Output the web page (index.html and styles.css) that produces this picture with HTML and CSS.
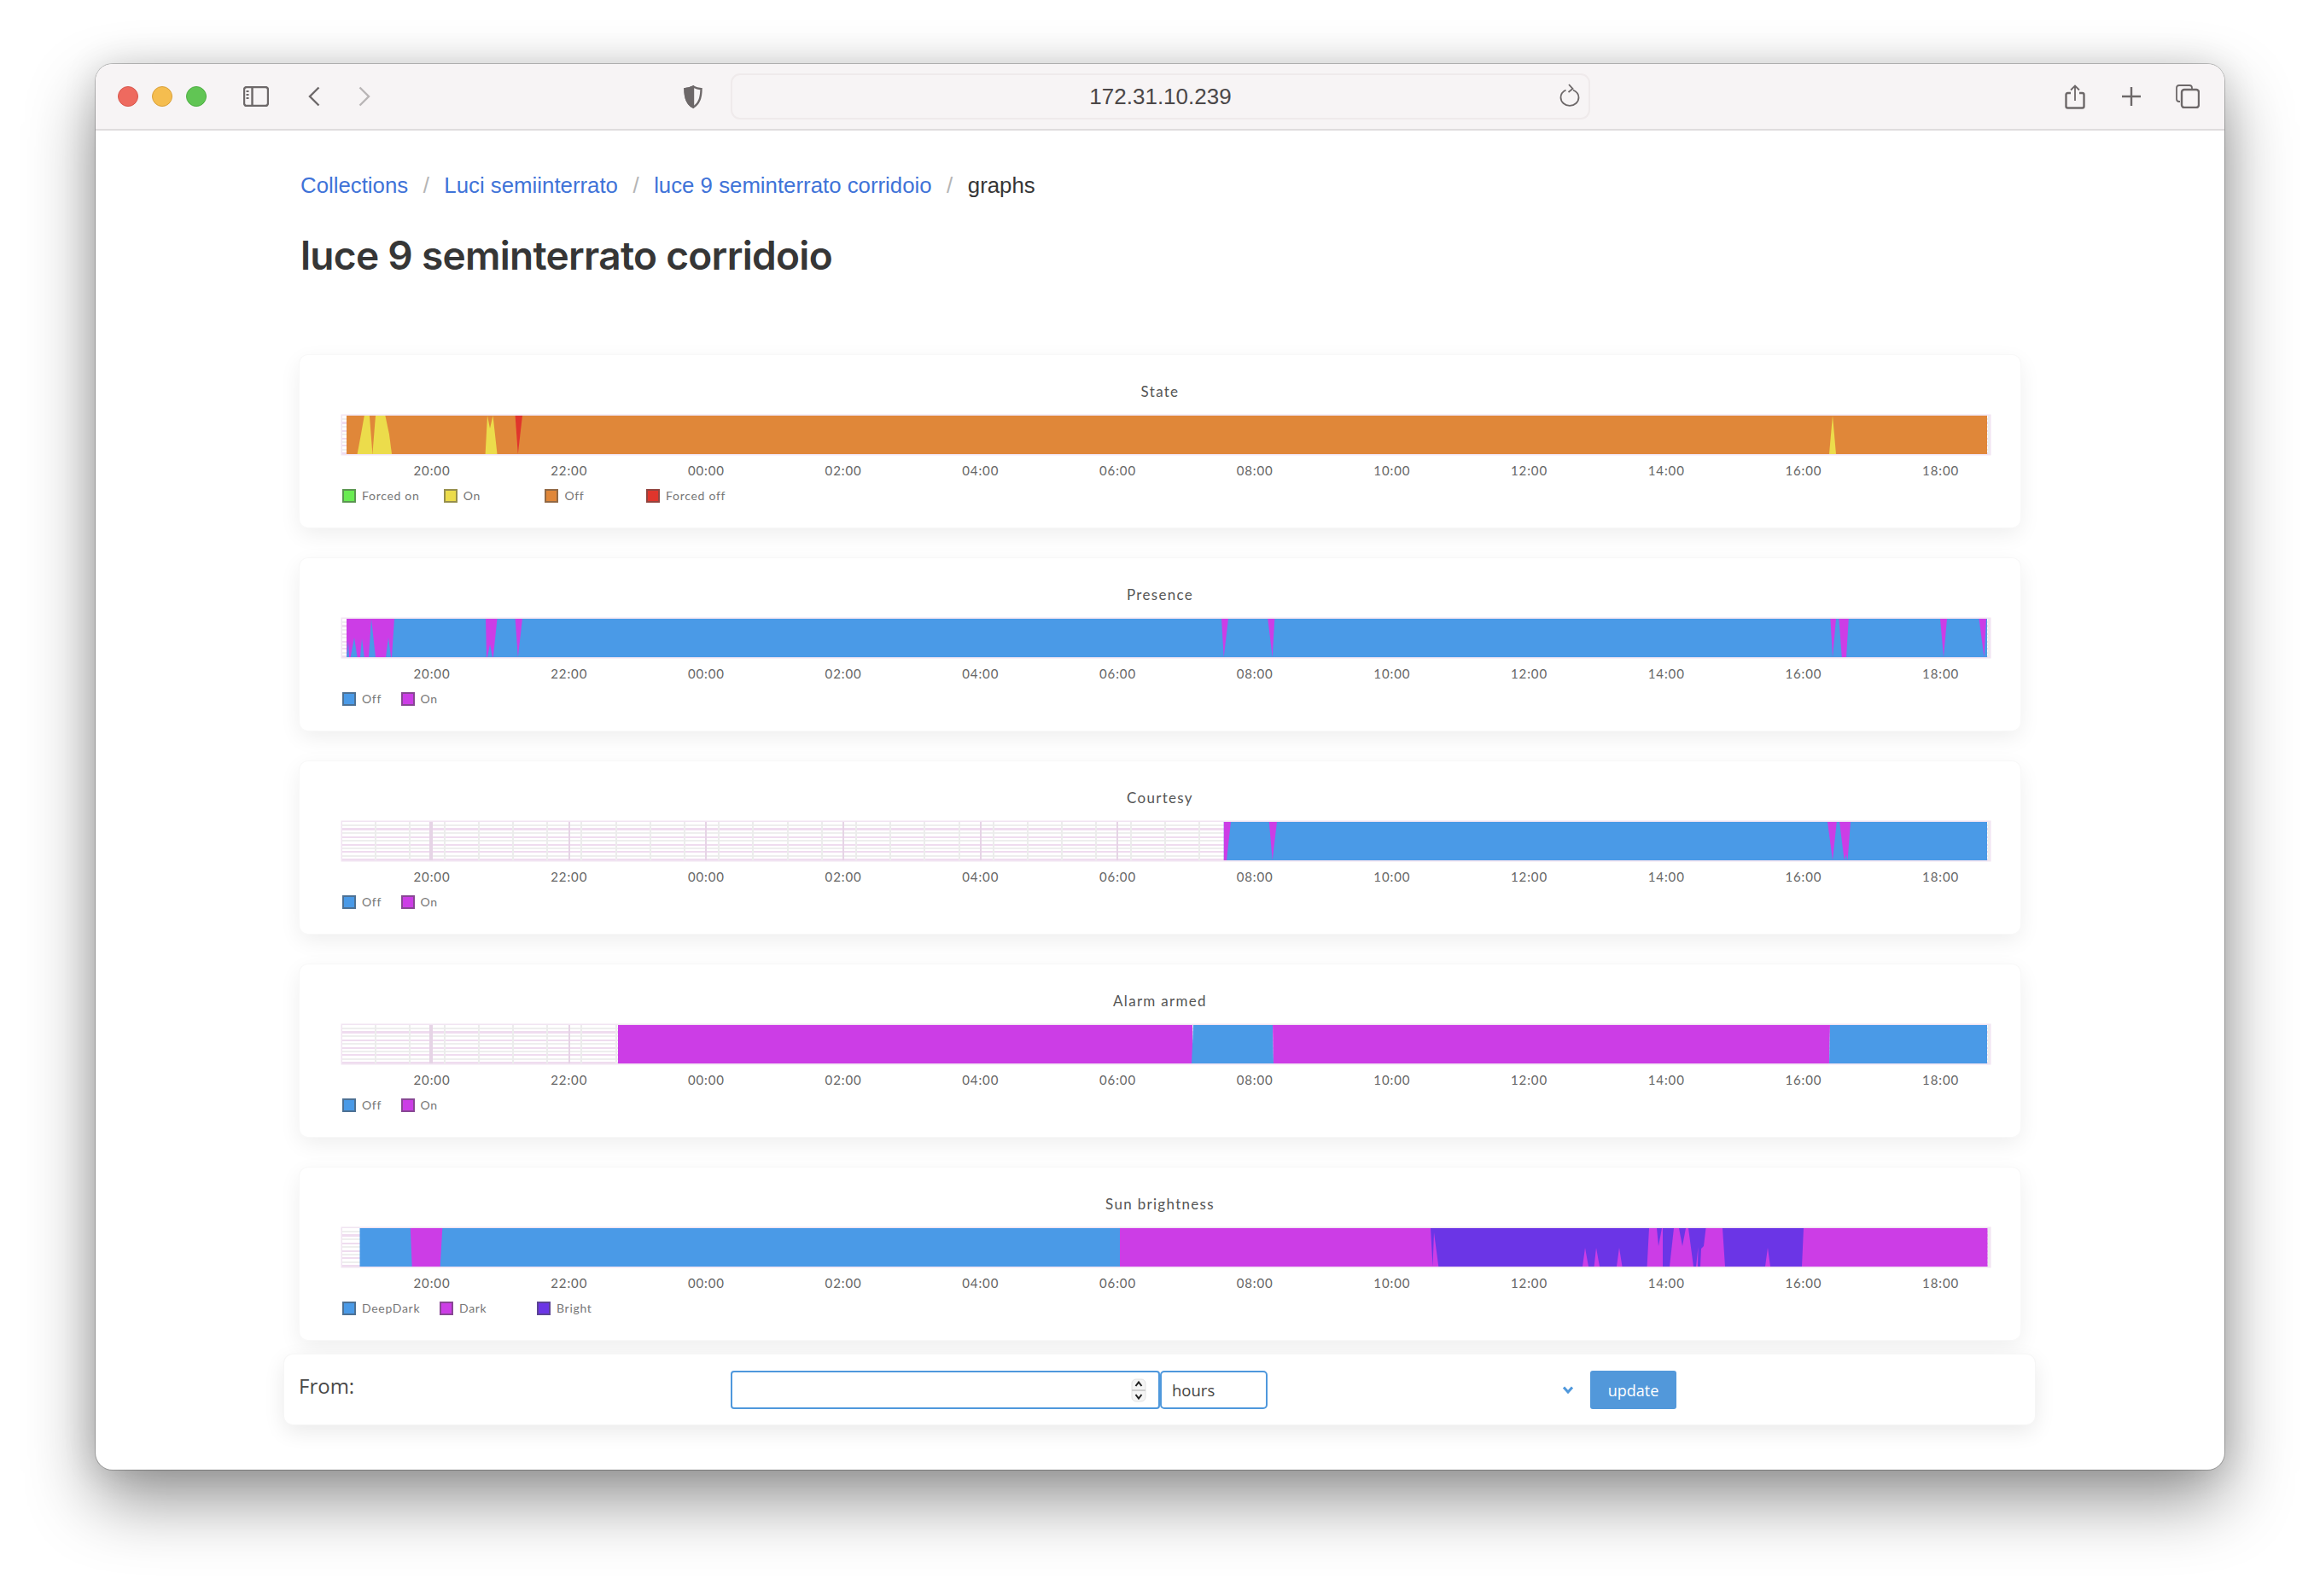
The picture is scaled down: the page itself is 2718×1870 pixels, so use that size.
FILE: index.html
```html
<!DOCTYPE html>
<html lang="it">
<head>
<meta charset="utf-8">
<title>luce 9 seminterrato corridoio</title>
<link rel="stylesheet" href="styles.css">
</head>
<body>
<div class="window">
  <header class="toolbar">
    <div class="lights"><span class="light red"></span><span class="light yellow"></span><span class="light green"></span></div>
    <svg class="ico sidebar" width="30" height="24" viewBox="0 0 30 24"><rect x="1" y="1" width="28" height="22" rx="3"/><path d="M10.5 1v22"/><path class="thin" d="M3.5 6h3M3.5 10h3M3.5 14h3"/></svg>
    <svg class="ico back" width="14" height="24" viewBox="0 0 14 24"><path d="M12.5 1.5 2 12l10.500 10.500"/></svg>
    <svg class="ico forward" width="14" height="24" viewBox="0 0 14 24"><path d="M1.500 1.500 12 12 1.500 22.500"/></svg>
    <svg class="ico shield" width="22" height="27" viewBox="0 0 22 27"><path class="fill" d="M11 1.500C8 3 4.500 4 1.500 4.200 1.500 15 4 22 11 25.500Z"/><path d="M11 1.500C14 3 17.500 4 20.500 4.200 20.500 15 18 22 11 25.500 4 22 1.500 15 1.500 4.200 4.500 4 8 3 11 1.500Z"/></svg>
    <div class="urlbar">
      <span class="url">172.31.10.239</span>
      <svg class="ico reload" width="24" height="27" viewBox="0 0 24 27"><path class="thin" d="M16 7.500C19.800 9.200 22.500 12.500 22.500 16.200 22.500 21.500 17.800 25.800 12 25.800S1.500 21.500 1.500 16.200C1.500 12.500 3.800 9.300 7.500 7.500"/><path class="thin" d="M11 1 15.500 6 10.500 10"/></svg>
    </div>
    <svg class="ico share" width="24" height="29" viewBox="0 0 24 29"><path d="M7 10H3.500Q1.500 10 1.500 12V25.500Q1.500 27.500 3.500 27.500H20.500Q22.500 27.500 22.500 25.500V12Q22.500 10 20.500 10H17"/><path class="thin" d="M12 19V1.500M7 6.500 12 1.500 17 6.500"/></svg>
    <svg class="ico plus" width="22" height="22" viewBox="0 0 22 22"><path d="M11 0v22M0 11h22"/></svg>
    <svg class="ico tabs" width="28" height="28" viewBox="0 0 28 28"><path class="thin" d="M5 20H4Q1 20 1 17V4Q1 1 4 1H16Q19 1 19 4V5"/><rect x="7" y="6" width="20" height="21" rx="3"/></svg>
  </header>

  <main class="content">
    <nav><ol class="crumbs">
      <li><a href="#">Collections</a></li>
      <li><a href="#">Luci semiinterrato</a></li>
      <li><a href="#">luce 9 seminterrato corridoio</a></li>
      <li class="current">graphs</li>
    </ol></nav>
    <h1 class="title">luce 9 seminterrato corridoio</h1>

    <section class="card">
      <h2 class="chart-title">State</h2>
      <div class="plot"><svg class="bands" width="1930" height="45" viewBox="0 0 1930 45">
        <rect class="orange" x="5" width="1922" height="45"/>
        <polygon class="yellow" points="17.600,45 21.900,22 25.800,0 31.900,0 35.400,45"/>
        <polygon class="yellow" points="35.400,45 39,0 50.400,0 55,22 58,45"/>
        <polygon class="yellow" points="167.600,45 170,0 173,15 176.500,0 181.500,45"/>
        <polygon class="red" points="202.600,0 211,0 205.800,45"/>
        <polygon class="yellow" points="1742,45 1746,0 1750,45"/>
      </svg></div>
      <div class="ticks"><span>20:00</span><span>22:00</span><span>00:00</span><span>02:00</span><span>04:00</span><span>06:00</span><span>08:00</span><span>10:00</span><span>12:00</span><span>14:00</span><span>16:00</span><span>18:00</span></div>
      <ul class="legend wide">
        <li><i class="swatch s-green"></i>Forced on</li>
        <li><i class="swatch s-yellow"></i>On</li>
        <li><i class="swatch s-orange"></i>Off</li>
        <li><i class="swatch s-red"></i>Forced off</li>
      </ul>
    </section>

    <section class="card">
      <h2 class="chart-title">Presence</h2>
      <div class="plot"><svg class="bands" width="1930" height="45" viewBox="0 0 1930 45">
        <rect class="blue" x="5" width="1922" height="45"/>
        <polygon class="magenta" points="5,0 61,0 58,45 57,45 54,22 51,45 39,45 34,0 31,45 25.800,45 23,23 21,45 17.600,45 14,22 9.700,45 8,45 6.900,26 5,45"/>
        <polygon class="magenta" points="168,0 181.500,0 176.800,45 176,45 173,30 170,45 169,45"/>
        <polygon class="magenta" points="202.600,0 211,0 205.800,45"/>
        <polygon class="magenta" points="1030,0 1038,0 1032.700,45"/>
        <polygon class="magenta" points="1084.300,0 1092.300,0 1089.700,45"/>
        <polygon class="magenta" points="1743.400,0 1750,0 1746,45"/>
        <polygon class="magenta" points="1753.400,0 1764.800,0 1762,45 1756.800,45"/>
        <polygon class="magenta" points="1872,0 1880,0 1876,45"/>
        <polygon class="magenta" points="1917.500,0 1926,0 1923.500,45"/>
      </svg></div>
      <div class="ticks"><span>20:00</span><span>22:00</span><span>00:00</span><span>02:00</span><span>04:00</span><span>06:00</span><span>08:00</span><span>10:00</span><span>12:00</span><span>14:00</span><span>16:00</span><span>18:00</span></div>
      <ul class="legend narrow">
        <li><i class="swatch s-blue"></i>Off</li>
        <li><i class="swatch s-magenta"></i>On</li>
      </ul>
    </section>

    <section class="card">
      <h2 class="chart-title">Courtesy</h2>
      <div class="plot"><svg class="bands" width="1930" height="45" viewBox="0 0 1930 45">
        <rect class="blue" x="1032.800" width="894.200" height="45"/>
        <polygon class="magenta" points="1032.800,0 1041,0 1036,45 1032.800,45"/>
        <polygon class="magenta" points="1085.800,0 1095,0 1089.700,45"/>
        <polygon class="magenta" points="1740,0 1750.800,0 1746,45"/>
        <polygon class="magenta" points="1754,0 1767,0 1763.600,45 1761.700,38 1759.700,45"/>
      </svg></div>
      <div class="ticks"><span>20:00</span><span>22:00</span><span>00:00</span><span>02:00</span><span>04:00</span><span>06:00</span><span>08:00</span><span>10:00</span><span>12:00</span><span>14:00</span><span>16:00</span><span>18:00</span></div>
      <ul class="legend narrow">
        <li><i class="swatch s-blue"></i>Off</li>
        <li><i class="swatch s-magenta"></i>On</li>
      </ul>
    </section>

    <section class="card">
      <h2 class="chart-title">Alarm armed</h2>
      <div class="plot"><svg class="bands" width="1930" height="45" viewBox="0 0 1930 45">
        <rect class="magenta" x="323" width="673" height="45"/>
        <polygon class="blue" points="997,0 1090,0 1091,45 995,45"/>
        <polygon class="magenta" points="1090,0 1743,0 1742,45 1091,45"/>
        <polygon class="blue" points="1743,0 1927,0 1927,45 1742,45"/>
      </svg></div>
      <div class="ticks"><span>20:00</span><span>22:00</span><span>00:00</span><span>02:00</span><span>04:00</span><span>06:00</span><span>08:00</span><span>10:00</span><span>12:00</span><span>14:00</span><span>16:00</span><span>18:00</span></div>
      <ul class="legend narrow">
        <li><i class="swatch s-blue"></i>Off</li>
        <li><i class="swatch s-magenta"></i>On</li>
      </ul>
    </section>

    <section class="card">
      <h2 class="chart-title">Sun brightness</h2>
      <div class="plot"><svg class="bands" width="1930" height="45" viewBox="0 0 1930 45">
        <rect class="blue" x="20.500" width="892" height="45"/>
        <polygon class="magenta" points="79.800,0 117.300,0 114.700,45 81.700,45"/>
        <rect class="magenta" x="911" width="1016.500" height="45"/>
        <polygon class="purple" points="1275,0 1531,0 1528.600,45 1499.500,45 1496,23 1493,45 1473,45 1469,23 1466.600,45 1460,45 1456,23 1453,45 1284.300,45 1279,5 1277.500,45"/>
        <polygon class="purple" points="1540,0 1546,0 1542,21"/>
        <polygon class="purple" points="1547,0 1560,0 1555,45 1547,45"/>
        <polygon class="purple" points="1566,0 1574,0 1570,21"/>
        <polygon class="purple" points="1577,0 1597.500,0 1595,21 1592,24 1591,45 1588,45 1588.500,22 1586,45 1583,45"/>
        <polygon class="purple" points="1617,0 1712,0 1710,45 1673,45 1670,23 1667,45 1620,45"/>
      </svg></div>
      <div class="ticks"><span>20:00</span><span>22:00</span><span>00:00</span><span>02:00</span><span>04:00</span><span>06:00</span><span>08:00</span><span>10:00</span><span>12:00</span><span>14:00</span><span>16:00</span><span>18:00</span></div>
      <ul class="legend medium">
        <li><i class="swatch s-blue"></i>DeepDark</li>
        <li><i class="swatch s-magenta"></i>Dark</li>
        <li><i class="swatch s-purple"></i>Bright</li>
      </ul>
    </section>

    <form class="range">
      <label class="range-label" for="from">From:</label>
      <div class="num">
        <input class="num-input" id="from" type="text">
        <svg class="spinner" width="18" height="28" viewBox="0 0 18 28"><rect class="spin-bg" x="1" y="1" width="16" height="26" rx="5"/><path class="spin-mid" d="M1 14h16"/><path class="spin-arrow" d="M5.500 9 9 4.500 12.500 9M5.500 19 9 23.500 12.500 19"/></svg>
      </div>
      <div class="unit">
        <select class="unit-select"><option>hours</option></select>
        <svg class="chev" width="14" height="11" viewBox="0 0 14 11"><path d="M2 2.500 7 8l5-5.500"/></svg>
      </div>
      <button class="update" type="button">update</button>
    </form>
  </main>
</div>
</body>
</html>
```
FILE: styles.css
```css
* { box-sizing: border-box; }
html, body { margin: 0; height: 1870px; overflow: hidden; background: #fff; }
body { padding: 75px 112px 0; font-family: "Liberation Sans", Arial, sans-serif; }

.window {
  width: 2494px;
  height: 1647px;
  background: #fff;
  border-radius: 20px;
  box-shadow: 0 0 0 1px rgba(0,0,0,.22), 0 36px 80px rgba(0,0,0,.42), 0 0 40px rgba(0,0,0,.12);
  overflow: hidden;
}

.toolbar {
  height: 78px;
  background: #f7f4f5;
  border-bottom: 2px solid #dfdcdd;
  display: flex;
  align-items: center;
  padding-left: 26px;
}
.lights { display: flex; gap: 16px; }
.light { width: 24px; height: 24px; border-radius: 50%; }
.light.red { background: #ee6a5f; border: 1px solid #d8564c; }
.light.yellow { background: #f5bd4f; border: 1px solid #d9a03a; }
.light.green { background: #61c554; border: 1px solid #4fae44; }

.ico { flex: none; fill: none; stroke: #6d6869; stroke-width: 2.4; }
.ico .thin { stroke-width: 1.8; }
.ico .fill { fill: #6d6869; }
.sidebar { margin-left: 43px; }
.back { margin-left: 46px; }
.forward { margin-left: 45px; stroke: #b9b5b6; }
.shield { margin-left: 367px; }
.urlbar {
  margin-left: 33px;
  width: 1007px;
  height: 54px;
  border: 2px solid #efeaeb;
  border-radius: 11px;
  display: grid;
  grid-template-columns: 1fr auto 1fr;
  align-items: center;
  padding: 0 10px;
}
.url { grid-column: 2; font-size: 26px; color: #4b4748; }
.reload { grid-column: 3; justify-self: end; margin-top: -4px; }
.share { margin-left: 556px; }
.plus { margin-left: 43px; }
.tabs { margin-left: 41px; }

.content { padding: 48px 238px 0 239px; }

.crumbs { list-style: none; margin: 0; padding: 0 0 0 1px; display: flex; font-size: 25.800px; line-height: 32px; }
.crumbs a { color: #3f73d8; text-decoration: none; }
.crumbs li + li::before { content: "/"; color: #b5b5b5; padding: 0 17.500px; }
.crumbs .current { color: #363636; }

.title {
  margin: 36px 0 87px;
  padding-left: 1px;
  font-family: Inter, "Liberation Sans", sans-serif;
  font-size: 46px;
  line-height: 60px;
  font-weight: 600;
  letter-spacing: -.700px;
  color: #363636;
}

.card {
  width: 2016px;
  height: 202px;
  margin-bottom: 36px;
  padding: 33px 36px 0 50px;
  background: #fff;
  border-radius: 10px;
  box-shadow: 0 0 0 1px #f8f8f8, 0 8px 26px rgba(0,0,0,.07);
  font-family: Lato, sans-serif;
  color: #666;
}
.card:nth-of-type(5) { margin-bottom: 17px; }
.chart-title {
  margin: 0 0 18px;
  padding-right: 14px;
  font-size: 17px;
  line-height: 20px;
  font-weight: 400;
  letter-spacing: 1.300px;
  text-align: center;
  color: #555;
}

.plot {
  width: 1930px;
  height: 45px;
  box-shadow: 0 0 0 1.500px #f1e4f2;
  background:
    repeating-linear-gradient(90deg, #e6d4e6 0 2px, transparent 2px 160.700px) 104px 0 repeat-x,
    repeating-linear-gradient(90deg, transparent 0 38.200px, #ececec 38.200px 40.200px),
    repeating-linear-gradient(180deg, #efdcef 0 2px, transparent 2px 4.400px, #eeeeee 4.400px 6.400px, transparent 6.400px 8.800px) 0 8px;
}
.bands { display: block; }
.orange { fill: #e08739; }
.yellow { fill: #ecdc4b; }
.red { fill: #e0352c; }
.blue { fill: #4a9ae7; }
.magenta { fill: #cc3de6; }
.purple { fill: #6b35e6; }

.ticks {
  display: grid;
  grid-template-columns: repeat(12, 160.700px);
  margin: 9px 0 0 24.700px;
  font-size: 15px;
  line-height: 20px;
  letter-spacing: .900px;
  text-align: center;
  color: #666;
}

.legend { list-style: none; margin: 12px 0 0; padding: 0; display: flex; font-size: 14px; line-height: 16px; letter-spacing: .700px; color: #777; }
.legend li { display: flex; align-items: center; gap: 7px; }
.legend.wide li { width: 118.700px; }
.legend.narrow li { width: 68.600px; }
.legend.medium li { width: 114px; }
.swatch { width: 16px; height: 16px; border: 2px solid rgba(80,80,80,.55); flex: none; }
.s-green { background: #69ec52; }
.s-yellow { background: #ecdc4b; }
.s-orange { background: #e08739; }
.s-red { background: #e0352c; }
.s-blue { background: #4a9ae7; }
.s-magenta { background: #cc3de6; }
.s-purple { background: #6b35e6; }

.range {
  width: 2051px;
  height: 82px;
  margin-left: -18px;
  padding: 19px 0 0 17px;
  background: #fff;
  border-radius: 10px;
  box-shadow: 0 0 0 1px #f6f6f6, 0 8px 26px rgba(0,0,0,.09);
  display: grid;
  grid-template-columns: 506px 503px 504px 101px;
  grid-template-rows: 45px;
  font-family: "Open Sans", sans-serif;
}
.range-label { font-size: 24px; line-height: 36px; color: #4a4a4a; }
.num {
  display: flex;
  align-items: center;
  padding-right: 14px;
  border: 2.500px solid #4f98dc;
  border-radius: 4px;
}
.num-input { flex: 1; min-width: 0; height: 100%; border: 0; outline: 0; background: none; }
.spinner { flex: none; }
.spin-bg { fill: #f5f5f5; stroke: #e2e2e2; }
.spin-mid { stroke: #cfcfcf; stroke-width: 2; fill: none; }
.spin-arrow { stroke: #222; stroke-width: 2; fill: none; }
.unit { display: flex; align-items: center; position: relative; }
.unit-select {
  appearance: none;
  width: 126px;
  height: 100%;
  padding: 0 0 0 12px;
  border: 2px solid #4f98dc;
  border-radius: 5px;
  background: #fff;
  font: 18.500px "Open Sans", sans-serif;
  color: #444;
}
.chev { position: absolute; left: 471px; top: 17px; fill: none; stroke: #4f98dc; stroke-width: 3; }
.update {
  border: 0;
  border-radius: 3px;
  background: #5298da;
  color: #fff;
  font: 18px "Open Sans", sans-serif;
  padding: 0;
}
```
